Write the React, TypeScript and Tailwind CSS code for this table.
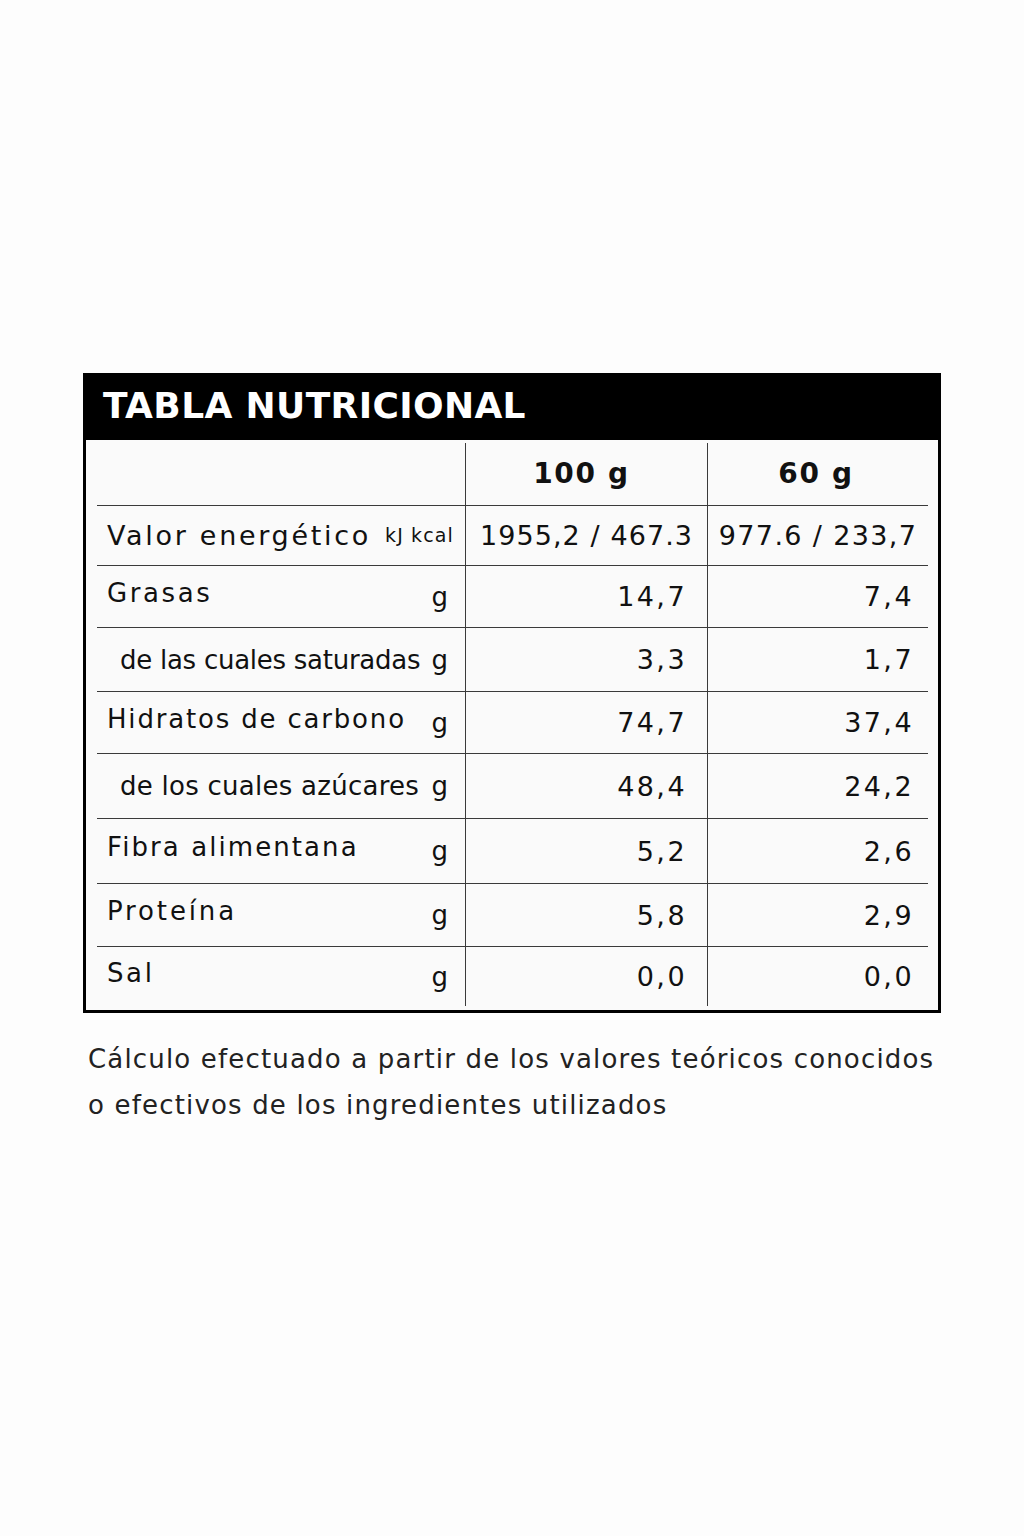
import React from 'react';

type Row = {
  label: string;
  unit: string;
  per100: string;
  perServing: string;
  indent?: boolean;
  tracking: string;
  height: string;
};

const rows: Row[] = [
  { label: 'Grasas', unit: 'g', per100: '14,7', perServing: '7,4', tracking: 'tracking-[0.1em]', height: 'h-[62px]' },
  { label: 'de las cuales saturadas', unit: 'g', per100: '3,3', perServing: '1,7', indent: true, tracking: 'tracking-[-0.01em]', height: 'h-[64px]' },
  { label: 'Hidratos de carbono', unit: 'g', per100: '74,7', perServing: '37,4', tracking: 'tracking-[0.07em]', height: 'h-[62px]' },
  { label: 'de los cuales azúcares', unit: 'g', per100: '48,4', perServing: '24,2', indent: true, tracking: 'tracking-[0.01em]', height: 'h-[65px]' },
  { label: 'Fibra alimentana', unit: 'g', per100: '5,2', perServing: '2,6', tracking: 'tracking-[0.08em]', height: 'h-[65px]' },
  { label: 'Proteína', unit: 'g', per100: '5,8', perServing: '2,9', tracking: 'tracking-[0.11em]', height: 'h-[63px]' },
  { label: 'Sal', unit: 'g', per100: '0,0', perServing: '0,0', tracking: 'tracking-[0.1em]', height: 'h-[60px]' },
];

const cols = 'grid grid-cols-[368px_242px_221px]';
const line = 'border-[#3a3a3a]';

const NutrientRow = ({ row }: { row: Row }) => (
  <div className={`${cols} ${row.height} border-t-[1.5px] ${line}`}>
    <div
      className={`flex items-center justify-between pr-[17px] ${
        row.indent ? 'pl-[23px]' : 'pl-[10px]'
      }`}
    >
      <span className={`${row.tracking} ${row.indent ? '' : 'mb-[8px]'}`}>{row.label}</span>
      <span>{row.unit}</span>
    </div>
    <div className={`flex items-center justify-end pr-[20px] border-l-[1.5px] ${line} text-[27px] tracking-[0.09em]`}>
      {row.per100}
    </div>
    <div className={`flex items-center justify-end pr-[14px] border-l-[1.5px] ${line} text-[27px] tracking-[0.09em]`}>
      {row.perServing}
    </div>
  </div>
);

export default function App() {
  return (
    <div className="w-[1024px] h-[1536px] bg-[#fdfdfd] pt-[373px] pl-[83px] text-[#111] font-['DejaVu_Sans',sans-serif]">
      <div className="w-[858px] border-[3px] border-black bg-[#fafafa]">
        <div className="h-[64px] bg-black flex items-center pl-[17px] pb-[4px]">
          <h1 className="text-white font-bold text-[36px] tracking-[0.01em] leading-none">
            TABLA NUTRICIONAL
          </h1>
        </div>

        <div className="pt-[3px] pb-[4px] pl-[11px] pr-[10px] text-[26px] leading-none">
          <div className={`${cols} h-[62px] font-bold text-[28px] tracking-[0.06em]`}>
            <div />
            <div className={`flex items-center justify-center pr-[10px] border-l-[1.5px] ${line}`}>100 g</div>
            <div className={`flex items-center justify-center pr-[4px] border-l-[1.5px] ${line}`}>60 g</div>
          </div>

          <div className={`${cols} h-[60px] border-t-[1.5px] ${line}`}>
            <div className="flex items-center justify-between pl-[10px] pr-[11px]">
              <span className="text-[27px] tracking-[0.1em]">Valor energético</span>
              <span className="text-[19px] tracking-[0.06em]">kJ kcal</span>
            </div>
            <div className={`flex items-center justify-center border-l-[1.5px] ${line} text-[27px] tracking-[0.04em]`}>
              1955,2 / 467.3
            </div>
            <div className={`flex items-center justify-center border-l-[1.5px] ${line} text-[27px] tracking-[0.05em]`}>
              977.6 / 233,7
            </div>
          </div>

          {rows.map((row) => (
            <NutrientRow key={row.label} row={row} />
          ))}
        </div>
      </div>

      <div className="mt-[23px] pl-[5px] text-[26px] leading-[46px] tracking-[0.045em] text-[#222]">
        <p>Cálculo efectuado a partir de los valores teóricos conocidos</p>
        <p>o efectivos de los ingredientes utilizados</p>
      </div>
    </div>
  );
}
